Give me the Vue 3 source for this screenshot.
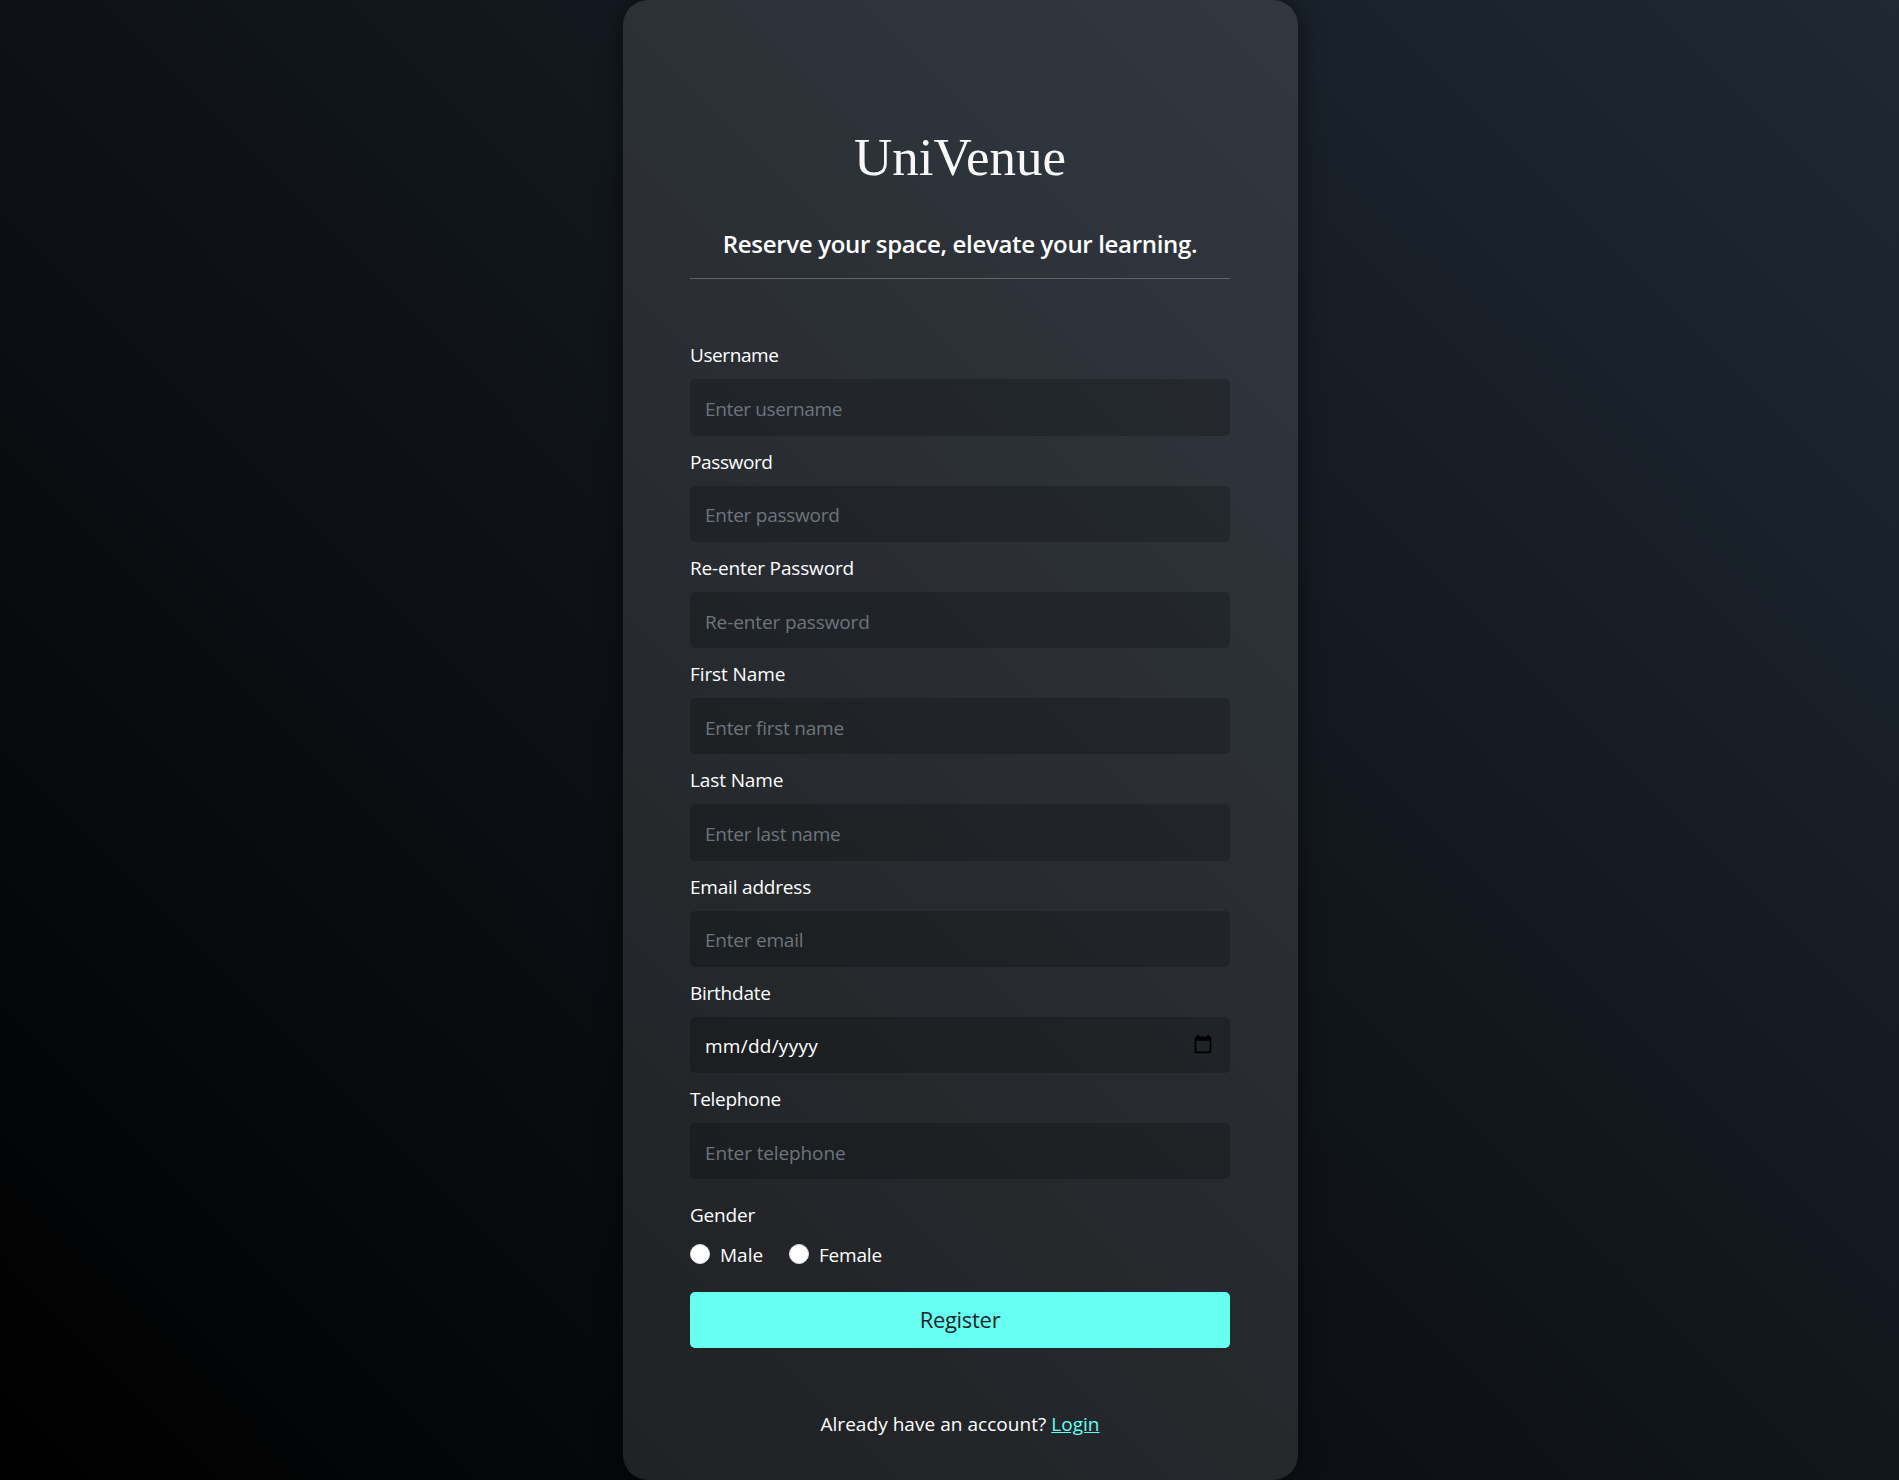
<script setup>
import { ref, reactive } from 'vue'

const fields = [
  { id: 'username', label: 'Username', hint: 'Enter username', type: 'text' },
  { id: 'password', label: 'Password', hint: 'Enter password', type: 'password' },
  { id: 'repassword', label: 'Re-enter Password', hint: 'Re-enter password', type: 'password' },
  { id: 'first', label: 'First Name', hint: 'Enter first name', type: 'text' },
  { id: 'last', label: 'Last Name', hint: 'Enter last name', type: 'text' },
  { id: 'email', label: 'Email address', hint: 'Enter email', type: 'email' },
  { id: 'birthdate', label: 'Birthdate', type: 'date' },
  { id: 'telephone', label: 'Telephone', hint: 'Enter telephone', type: 'tel' },
]
const form = reactive({})
const gender = ref('')
</script>

<template>
  <main class="page">
    <section class="card">
      <h1 class="logo">UniVenue</h1>
      <h2 class="tagline">Reserve your space, elevate your learning.</h2>
      <form class="form" @submit.prevent>
        <div v-for="f in fields" :key="f.id" class="field">
          <label :for="f.id" :class="'l-' + f.id">{{ f.label }}</label>
          <div v-if="f.type === 'date'" class="control date">
            <span class="date-text">mm/dd/yyyy</span>
            <svg width="20" height="20" viewBox="0 0 24 24" fill="#000">
              <path d="M20 3h-1V1h-2v2H7V1H5v2H4c-1.100 0-2 .9-2 2v16c0 1.100.9 2 2 2h16c1.100 0 2-.9 2-2V5c0-1.100-.9-2-2-2zm0 18H4V8h16v13z" />
            </svg>
          </div>
          <input v-else :id="f.id" v-model="form[f.id]" class="control" :class="'i-' + f.id" :type="f.type" :placeholder="f.hint" />
        </div>
        <div class="gender">
          <div class="gender-title">Gender</div>
          <div class="options">
            <label class="option"><input v-model="gender" type="radio" value="m" /><span>Male</span></label>
            <label class="option female"><input v-model="gender" type="radio" value="f" /><span>Female</span></label>
          </div>
        </div>
        <button class="register" type="submit">Register</button>
      </form>
      <p class="foot">Already have an account? <a href="#">Login</a></p>
    </section>
  </main>
</template>

<style>
body {
  background: #000;
  overflow: hidden;
}
</style>

<style scoped>
* {
  box-sizing: border-box;
}
.page {
  height: 1480px;
  display: flex;
  justify-content: center;
  padding-left: 21px;
  background: linear-gradient(45deg, #000, #1f2833);
  font-family: "Open Sans", "Noto Sans", sans-serif;
  font-size: 19px;
  line-height: 30px;
  color: #fff;
}
.card {
  width: 675px;
  height: 1480px;
  padding: 117px 67.5px 0;
  border-radius: 25px;
  background: rgba(255, 255, 255, 0.105);
  box-shadow: 0 0 25px rgba(0, 0, 0, 0.5);
}
.logo {
  margin: 0;
  height: 82px;
  line-height: 81px;
  text-align: center;
  font-family: "Liberation Serif", serif;
  font-weight: 400;
  font-size: 53px;
  color: #f8f8f8;
}
.tagline {
  margin: 0;
  height: 80px;
  padding-top: 30px;
  border-bottom: 1px solid #606466;
  text-align: center;
  font-size: 24px;
  font-weight: 600;
  letter-spacing: -0.33px;
}
.form {
  margin-top: 60.4px;
}
.field {
  margin-bottom: 10px;
}
.field label {
  display: block;
  height: 30px;
  margin-bottom: 10px;
  padding-top: 1px;
}
.l-username { letter-spacing: -0.42px; }
.l-password { letter-spacing: -0.38px; }
.l-repassword { letter-spacing: -0.15px; }
.l-first { letter-spacing: -0.1px; }
.l-last { letter-spacing: -0.12px; }
.l-email { letter-spacing: -0.2px; }
.l-birthdate { letter-spacing: -0.25px; }
.l-telephone { letter-spacing: -0.3px; }
.control {
  display: flex;
  align-items: center;
  width: 100%;
  height: 56.25px;
  padding: 3px 15px 0;
  border: 0;
  border-radius: 5px;
  background: rgba(0, 0, 0, 0.2);
  font: inherit;
  color: #fff;
}
.control::placeholder {
  color: #6c757d;
  opacity: 1;
}
.i-username { letter-spacing: -0.35px; }
.i-password { letter-spacing: -0.26px; }
.i-repassword { letter-spacing: -0.12px; }
.i-first { letter-spacing: -0.23px; }
.i-last { letter-spacing: -0.23px; }
.i-email { letter-spacing: -0.22px; }
.i-telephone { letter-spacing: -0.12px; }
.date {
  justify-content: space-between;
  padding: 2px 17px 0 15px;
}
.date-text {
  letter-spacing: 0.25px;
}
.date svg {
  margin-top: -4px;
}
.gender {
  margin-top: 20px;
}
.gender-title {
  height: 30px;
  padding-top: 1px;
  letter-spacing: -0.2px;
}
.options {
  display: flex;
  height: 30px;
  margin-top: 10px;
}
.option {
  display: flex;
  align-items: center;
  gap: 10px;
  width: 99px;
}
.option span {
  padding-top: 1px;
}
.female {
  letter-spacing: -0.2px;
}
.option input {
  appearance: none;
  width: 20px;
  height: 20px;
  margin: 0;
  border: 1px solid #dee2e6;
  border-radius: 50%;
  background: #fff;
}
.register {
  display: block;
  width: 100%;
  height: 56px;
  margin-top: 22.6px;
  padding: 0 0 2px;
  border: 0;
  border-radius: 5px;
  background: #66fff2;
  font: inherit;
  font-size: 22px;
  letter-spacing: -0.3px;
  color: #212529;
}
.foot {
  margin: 61px 0 0;
  text-align: center;
  letter-spacing: 0.04px;
}
.foot a {
  color: #66fff2;
}
</style>
